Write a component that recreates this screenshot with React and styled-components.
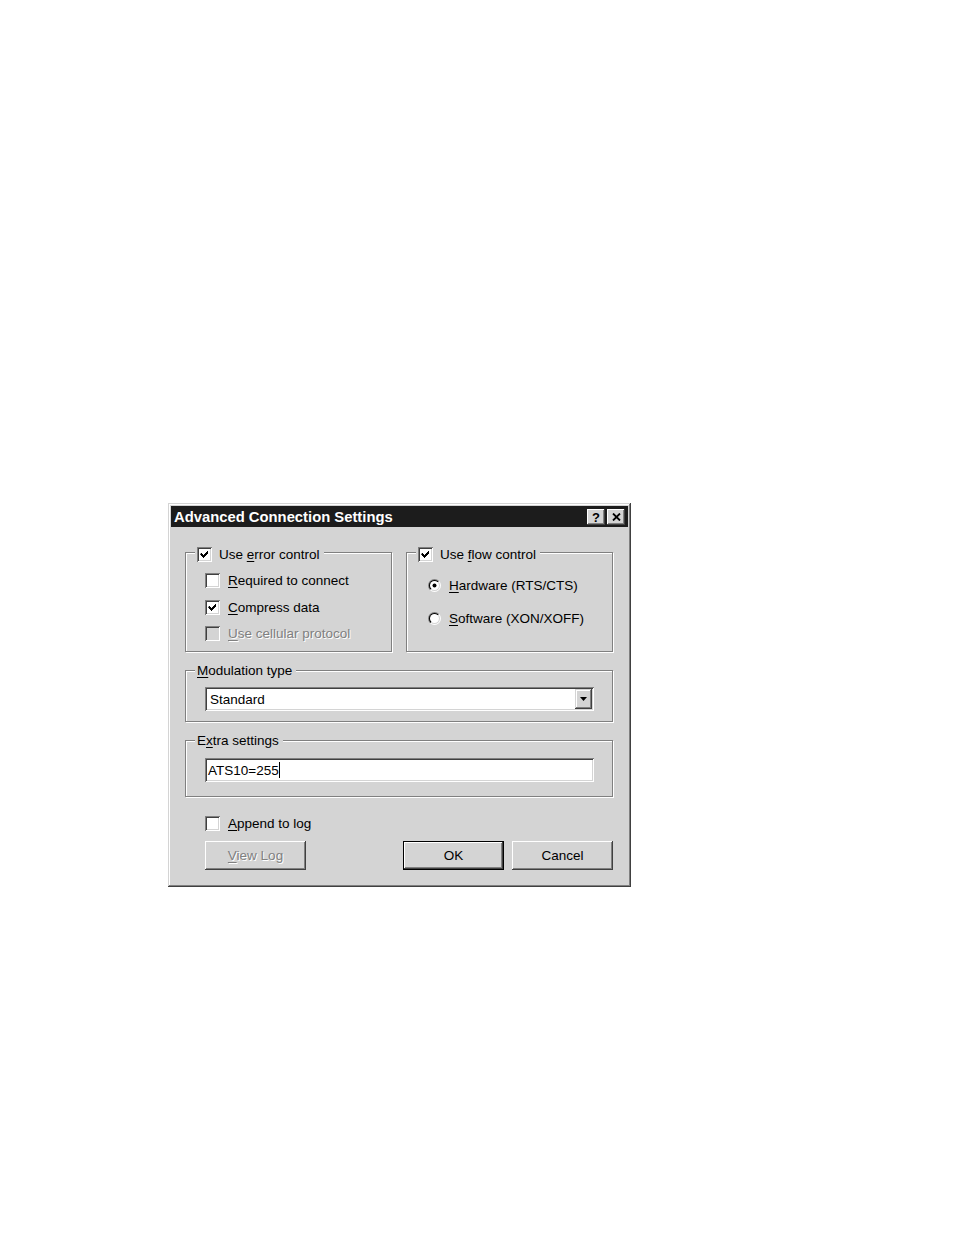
import React from "react";
import styled, { createGlobalStyle } from "styled-components";

const GlobalStyle = createGlobalStyle`
  html, body {
    margin: 0;
    background: #ffffff;
  }
  body {
    font-family: "Liberation Sans", Arial, sans-serif;
    font-size: 13.5px;
    color: #000;
  }
`;

const FACE = "#d4d4d4";

const Page = styled.div`
  padding: 503px 0 0 168px;
`;

const Window = styled.div`
  width: 463px;
  height: 384px;
  box-sizing: border-box;
  background: ${FACE};
  padding: 3px;
  display: flex;
  flex-direction: column;
  box-shadow: inset -1px -1px 0 #404040, inset 1px 1px 0 ${FACE},
    inset -2px -2px 0 #808080, inset 2px 2px 0 #ffffff;
`;

const TitleBar = styled.div`
  height: 21px;
  background: #1c1c1c;
  display: flex;
  align-items: center;
  padding: 1px 3px 0 3px;
  box-sizing: border-box;
  color: #fff;
  font-weight: bold;
  font-size: 14.8px;
`;

const TitleText = styled.span`
  flex: 1;
  white-space: nowrap;
`;

const TitleButtons = styled.div`
  display: flex;
  gap: 2px;
`;

const TitleButton = styled.div`
  width: 18px;
  height: 16px;
  background: ${FACE};
  display: flex;
  align-items: center;
  justify-content: center;
  color: #000;
  font-size: 13px;
  font-weight: bold;
  box-shadow: inset -1px -1px 0 #404040, inset 1px 1px 0 #ffffff,
    inset -2px -2px 0 #808080;
`;

const Body = styled.div`
  padding: 25px 15px 0 14px;
  display: flex;
  flex-direction: column;
`;

const TopRow = styled.div`
  display: grid;
  grid-template-columns: 207px 207px;
  column-gap: 14px;
`;

const Group = styled.div`
  position: relative;
  box-sizing: border-box;
  height: ${(p) => p.$h}px;
  margin-top: ${(p) => p.$mt || 0}px;
  border: 1px solid #808080;
  box-shadow: 1px 1px 0 #ffffff, inset 1px 1px 0 #ffffff;
  padding: ${(p) => p.$pad};
`;

const Legend = styled.div`
  position: absolute;
  left: 9px;
  top: ${(p) => p.$top}px;
  background: ${FACE};
  padding: 0 4px 0 2px;
  display: flex;
  align-items: center;
  gap: 7px;
  height: 15px;
  line-height: 15px;
  white-space: nowrap;
`;

const ItemList = styled.div`
  display: flex;
  flex-direction: column;
  gap: ${(p) => p.$gap}px;
`;

const Item = styled.div`
  display: flex;
  align-items: center;
  gap: 8px;
  height: 15px;
  line-height: 15px;
  white-space: nowrap;
  color: ${(p) => (p.$disabled ? "#808080" : "#000")};
  text-shadow: ${(p) => (p.$disabled ? "1px 1px 0 #ffffff" : "none")};
`;

const Box = styled.span`
  width: 15px;
  height: 15px;
  flex: none;
  box-sizing: border-box;
  background: ${(p) => (p.$disabled ? FACE : "#ffffff")};
  display: flex;
  align-items: center;
  justify-content: center;
  box-shadow: inset 1px 1px 0 #808080, inset -1px -1px 0 #ffffff,
    inset 2px 2px 0 #404040, inset -2px -2px 0 ${FACE};
`;

const U = styled.span`
  text-decoration: underline;
  text-underline-offset: 2px;
`;

const Field = styled.div`
  width: 389px;
  height: 24px;
  box-sizing: border-box;
  background: #ffffff;
  display: flex;
  align-items: center;
  padding: 2px 2px 2px ${(p) => p.$pl}px;
  box-shadow: inset 1px 1px 0 #808080, inset -1px -1px 0 #ffffff,
    inset 2px 2px 0 #404040, inset -2px -2px 0 ${FACE};
`;

const FieldText = styled.span`
  flex: 1;
  line-height: 15px;
  display: flex;
  align-items: center;
`;

const Caret = styled.span`
  display: inline-block;
  width: 1px;
  height: 16px;
  background: #000;
`;

const DropButton = styled.div`
  width: 17px;
  height: 20px;
  background: ${FACE};
  display: flex;
  align-items: center;
  justify-content: center;
  box-shadow: inset -1px -1px 0 #404040, inset 1px 1px 0 ${FACE},
    inset -2px -2px 0 #808080, inset 2px 2px 0 #ffffff;
`;

const AppendRow = styled.div`
  margin-top: 19px;
  padding-left: 20px;
`;

const ButtonRow = styled.div`
  margin-top: 10px;
  padding-left: 20px;
  display: flex;
  align-items: center;
  gap: 8px;
`;

const Spacer = styled.div`
  flex: 1;
`;

const Button = styled.div`
  width: 101px;
  height: 29px;
  box-sizing: border-box;
  background: ${FACE};
  display: flex;
  align-items: center;
  justify-content: center;
  color: ${(p) => (p.$disabled ? "#808080" : "#000")};
  text-shadow: ${(p) => (p.$disabled ? "1px 1px 0 #ffffff" : "none")};
  box-shadow: ${(p) =>
    p.$default
      ? `inset 0 0 0 1px #000, inset -2px -2px 0 #404040, inset 2px 2px 0 #ffffff, inset -3px -3px 0 #808080`
      : `inset -1px -1px 0 #404040, inset 1px 1px 0 #ffffff, inset -2px -2px 0 #808080, inset 2px 2px 0 ${FACE}`};
`;

function Check() {
  return (
    <svg width="9" height="9" viewBox="0 0 9 9">
      <path
        d="M1 3 h1 v1 h1 v1 h1 v-1 h1 v-1 h1 v-1 h1 v-1 h1 v3 h-1 v1 h-1 v1 h-1 v1 h-1 v1 h-1 v-1 h-1 v-1 h-1 v-1 h-1 z"
        fill="#000"
      />
    </svg>
  );
}

function CheckBox({ checked, disabled }) {
  return <Box $disabled={disabled}>{checked && <Check />}</Box>;
}

function Radio({ checked }) {
  return (
    <svg width="13" height="13" viewBox="0 0 13 13" style={{ flex: "none" }}>
      <defs>
        <linearGradient id="rOuter" x1="0" y1="0" x2="1" y2="1">
          <stop offset="0.5" stopColor="#808080" />
          <stop offset="0.5" stopColor="#ffffff" />
        </linearGradient>
        <linearGradient id="rInner" x1="0" y1="0" x2="1" y2="1">
          <stop offset="0.5" stopColor="#000000" />
          <stop offset="0.5" stopColor={FACE} />
        </linearGradient>
      </defs>
      <circle cx="6.5" cy="6.5" r="6.5" fill="url(#rOuter)" />
      <circle cx="6.5" cy="6.5" r="5.5" fill="url(#rInner)" />
      <circle cx="6.5" cy="6.5" r="4.5" fill="#ffffff" />
      {checked && <circle cx="6.5" cy="6.5" r="2" fill="#000" />}
    </svg>
  );
}

export default function App() {
  return (
    <Page>
      <GlobalStyle />
      <Window>
        <TitleBar>
          <TitleText>Advanced Connection Settings</TitleText>
          <TitleButtons>
            <TitleButton>?</TitleButton>
            <TitleButton>
              <svg width="9" height="8" viewBox="0 0 9 8">
                <path d="M1 0.5 L8 7.5 M8 0.5 L1 7.5" stroke="#000" strokeWidth="1.8" />
              </svg>
            </TitleButton>
          </TitleButtons>
        </TitleBar>

        <Body>
          <TopRow>
            <Group $h={100} $pad="20px 0 0 19px">
              <Legend $top={-6}>
                <CheckBox checked />
                <span>
                  Use <U>e</U>rror control
                </span>
              </Legend>
              <ItemList $gap={11.5}>
                <Item>
                  <CheckBox />
                  <span>
                    <U>R</U>equired to connect
                  </span>
                </Item>
                <Item>
                  <CheckBox checked />
                  <span>
                    <U>C</U>ompress data
                  </span>
                </Item>
                <Item $disabled>
                  <CheckBox disabled />
                  <span>
                    <U>U</U>se cellular protocol
                  </span>
                </Item>
              </ItemList>
            </Group>

            <Group $h={100} $pad="25px 0 0 21px">
              <Legend $top={-6}>
                <CheckBox checked />
                <span>
                  Use <U>f</U>low control
                </span>
              </Legend>
              <ItemList $gap={18}>
                <Item>
                  <Radio checked />
                  <span>
                    <U>H</U>ardware (RTS/CTS)
                  </span>
                </Item>
                <Item>
                  <Radio />
                  <span>
                    <U>S</U>oftware (XON/XOFF)
                  </span>
                </Item>
              </ItemList>
            </Group>
          </TopRow>

          <Group $h={52} $mt={18} $pad="16px 0 0 19px">
            <Legend $top={-8}>
              <span>
                <U>M</U>odulation type
              </span>
            </Legend>
            <Field $pl={5}>
              <FieldText>Standard</FieldText>
              <DropButton>
                <svg width="7" height="4" viewBox="0 0 7 4">
                  <path d="M0 0 H7 L3.5 4 Z" fill="#000" />
                </svg>
              </DropButton>
            </Field>
          </Group>

          <Group $h={57} $mt={18} $pad="17px 0 0 19px">
            <Legend $top={-8}>
              <span>
                E<U>x</U>tra settings
              </span>
            </Legend>
            <Field $pl={3}>
              <FieldText>
                ATS10=255
                <Caret />
              </FieldText>
            </Field>
          </Group>

          <AppendRow>
            <Item>
              <CheckBox />
              <span>
                <U>A</U>ppend to log
              </span>
            </Item>
          </AppendRow>

          <ButtonRow>
            <Button $disabled>
              <span>
                <U>V</U>iew Log
              </span>
            </Button>
            <Spacer />
            <Button $default>OK</Button>
            <Button>Cancel</Button>
          </ButtonRow>
        </Body>
      </Window>
    </Page>
  );
}
